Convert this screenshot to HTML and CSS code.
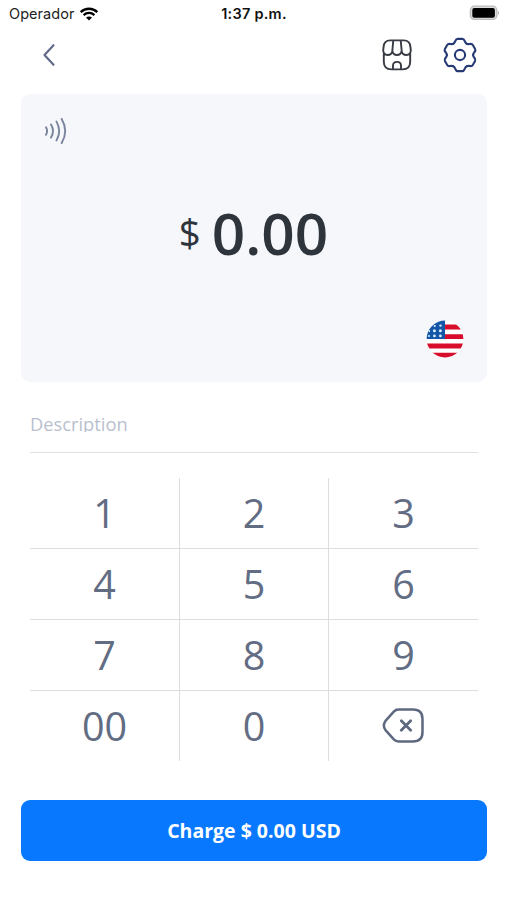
FILE: index.html
```html
<!DOCTYPE html>
<html lang="en">
<head>
<meta charset="utf-8">
<title>Charge</title>
<link rel="stylesheet" href="styles.css">
</head>
<body>
<div class="status">
  <div class="carrier"><span>Operador</span>
    <svg width="20" height="14" viewBox="0 0 20 14" fill="none" stroke="#000" stroke-width="2.3"><path d="M1.7 5.1C6.4.6 13.6.6 18.3 5.1M4.6 8.1C7.7 5.2 12.3 5.2 15.4 8.1"/><path d="M7 10.6C8.7 9.1 11.3 9.1 13 10.6L10 13.6Z" fill="#000" stroke="none"/></svg>
  </div>
  <time class="time">1:37 p.m.</time>
  <svg class="battery" width="32" height="16" viewBox="0 0 32 16"><rect x="1.4" y="1.2" width="26.4" height="13.2" rx="4" fill="#ddd" stroke="#bbb" stroke-width="1.3"/><rect x="3.3" y="2.9" width="22.6" height="9.8" rx="2" fill="#000"/><path d="M28.900 5.500Q31 7.800 28.900 10.100Z" fill="#aaa"/></svg>
</div>
<header class="nav">
  <svg class="back" width="16" height="26" viewBox="0 0 16 26" fill="none" stroke="#626b88" stroke-width="2.2" stroke-linecap="round" stroke-linejoin="round"><path d="M12.500 3.200 3.500 13l9 9.800"/></svg>
  <div class="actions">
    <svg width="32" height="34" viewBox="0 0 32 34" fill="none" stroke="#383b43" stroke-width="1.9" stroke-linecap="round" stroke-linejoin="round"><path d="M9.200 2.400H22.800C27 2.400 29.200 5 29.400 9L29.800 12C30 15 28 17 25.500 17C23 17 21 15.400 20.600 13C20.200 15.500 18.500 17 16 17S11.800 15.500 11.400 13C11 15.400 9 17 6.500 17C4 17 2 15 2.200 12L2.600 9C2.800 5 5 2.400 9.200 2.400ZM12.300 2.400 11.300 13M19.700 2.400 20.700 13M2.800 15.500V23.500C2.800 28.500 5.500 31.400 10.500 31.400H21.500C26.500 31.400 29.200 28.500 29.200 23.500V15.500M12 31V27.600C12 22.600 20 22.600 20 27.600V31"/></svg>
    <svg width="36" height="36" viewBox="-18 -18 36 36" fill="none" stroke="#263b75" stroke-width="2.100" stroke-linecap="round"><defs><path id="tooth" d="M-6.550-11.350C-3.900-12.880-5.200-16.100-2.300-16.100H2.300C5.200-16.100 3.900-12.880 6.550-11.350"/></defs><use href="#tooth"/><use href="#tooth" transform="rotate(60)"/><use href="#tooth" transform="rotate(120)"/><use href="#tooth" transform="rotate(180)"/><use href="#tooth" transform="rotate(240)"/><use href="#tooth" transform="rotate(300)"/><circle r="5.100"/></svg>
  </div>
</header>
<main>
  <section class="card">
    <svg class="nfc" width="26" height="30" viewBox="0 0 26 30" fill="none" stroke="#7a849b" stroke-width="1.900" stroke-linecap="round"><path d="M4 11.200Q6.200 15 4 18.800M9 8.400Q13 15 9 21.600M14.500 5.600Q19.900 15 14.500 24.400M19.700 2.900Q26.700 15 19.700 27.100"/></svg>
    <div class="amount"><span class="sign">$</span><span class="value">0.00</span></div>
    <svg class="flag" width="38" height="38" viewBox="0 0 38 38"><defs><clipPath id="round"><circle cx="19" cy="19" r="18.400"/></clipPath></defs><g clip-path="url(#round)"><path fill="#fff" d="M0 0h38v38H0z"/><path fill="#d80d2c" d="M18 4.600h20v5H18zM18 14.200h20v4.900H18zM0 23.600h38v4.900H0zM0 32.800h38V38H0z"/><path fill="#1456a8" d="M0 0h19v19.100H0z"/><g fill="#d9f0fa"><circle cx="8.700" cy="6" r="1.100"/><circle cx="14.500" cy="5.600" r="1.200"/><circle cx="8.400" cy="10.800" r="1.500"/><circle cx="14.400" cy="10.800" r="1.500"/><circle cx="3.200" cy="11" r="1"/><circle cx="3" cy="16" r="1"/><circle cx="8.400" cy="15.900" r="1.400"/><circle cx="14.400" cy="15.900" r="1.400"/></g></g></svg>
  </section>
  <div class="field"><div class="placeholder">Description</div></div>
  <div class="keypad">
    <div class="key">1</div><div class="key">2</div><div class="key">3</div>
    <div class="key">4</div><div class="key">5</div><div class="key">6</div>
    <div class="key">7</div><div class="key">8</div><div class="key">9</div>
    <div class="key">00</div><div class="key">0</div>
    <div class="key"><svg width="44" height="38" viewBox="0 0 44 38" fill="none" stroke="#5e6980" stroke-width="2.500" stroke-linecap="round" stroke-linejoin="round"><path d="M16.500 2.500H31Q40.500 2.500 40.500 12V25Q40.500 34.500 31 34.500H16.500Q13.800 34.500 11.800 32.400L3.500 23.100Q.2 18.500 3.500 13.900L11.800 4.600Q13.800 2.500 16.500 2.500Z"/><path stroke-width="2.800" d="m19.300 13.800 9.400 9.400m0-9.400-9.400 9.400"/></svg></div>
  </div>
  <div class="charge">Charge $ 0.00 USD</div>
</main>
</body>
</html>
```
FILE: styles.css
```css
* { box-sizing: border-box; }
body {
  margin: 0;
  height: 900px;
  overflow: hidden;
  background: #fff;
  font-family: "Open Sans", sans-serif;
}
svg { display: block; flex: none; }
.status {
  display: grid;
  grid-template-columns: 1fr auto 1fr;
  align-items: center;
  height: 28px;
  padding: 0 6px 0 9px;
  font: 14.5px/28px Inter, sans-serif;
  color: #222;
}
.carrier { display: flex; align-items: center; gap: 5px; letter-spacing: 0.05px; }
.time { margin-right: 2px; font-weight: 600; font-size: 14.5px; letter-spacing: 0.25px; color: #111; }
.battery { justify-self: end; margin-top: -2px; }
.nav {
  display: flex;
  justify-content: space-between;
  align-items: center;
  height: 54px;
  padding: 0 29px 0 41px;
}
.actions { display: flex; align-items: center; gap: 29px; }
.card {
  display: flex;
  flex-direction: column;
  height: 288px;
  margin: 12px 20px 0 21px;
  padding: 22px 23px 24px 21px;
  border-radius: 9px;
  background: #f5f7fb;
}
.amount {
  display: flex;
  justify-content: center;
  align-items: center;
  gap: 11px;
  height: 80px;
  margin-top: 46px;
  padding-left: 1px;
  color: #2e343b;
}
.sign { font-size: 38.5px; line-height: 80px; }
.value { font-size: 58.5px; font-weight: 600; line-height: 80px; }
.flag { align-self: flex-end; margin-top: auto; }
.field {
  height: 71px;
  margin: 0 29px 0 30px;
  padding-top: 30px;
  border-bottom: 1px solid #dedfe1;
}
.placeholder {
  height: 20px;
  overflow: hidden;
  font-size: 18.3px;
  line-height: 24px;
  color: #b9c0cf;
}
.keypad {
  display: grid;
  grid-template-columns: 150px 149px 149px;
  grid-template-rows: repeat(3, 71px) 70px;
  margin: 25px 29px 0 30px;
}
.key {
  display: flex;
  justify-content: center;
  align-items: center;
  border-right: 1px solid #dcdde0;
  border-bottom: 1px solid #dcdde0;
  font-size: 39.5px;
  line-height: 70px;
  color: #626d84;
}
.key:nth-child(3n) { border-right: 0; }
.key:nth-child(n+10) { border-bottom: 0; }
.charge {
  height: 61px;
  margin: 39px 20px 0 21px;
  border-radius: 9px;
  background: #0879ff;
  color: #fff;
  font-size: 19.5px;
  font-weight: 700;
  line-height: 61px;
  text-align: center;
}
```
